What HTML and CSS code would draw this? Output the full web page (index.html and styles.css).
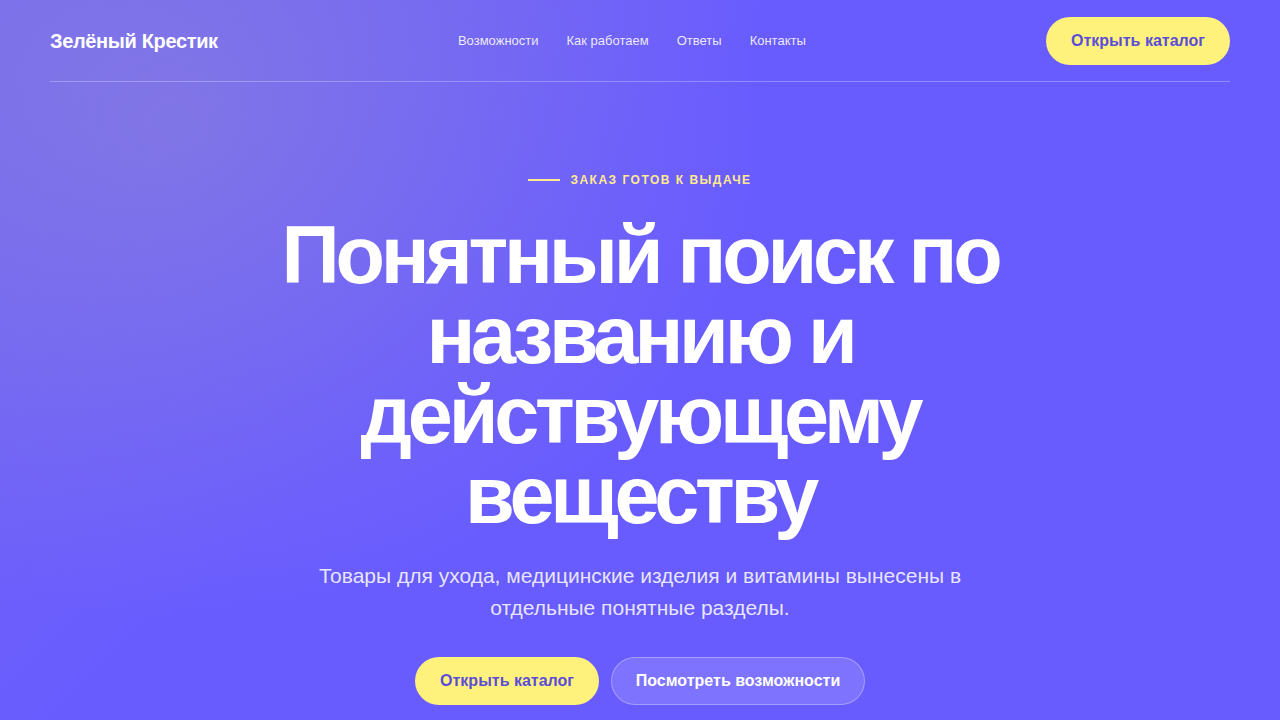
FILE: index.html
```html
<!DOCTYPE html>
<html lang="ru">
<head>
<meta charset="utf-8">
<title>Зелёный Крестик</title>
<link rel="stylesheet" href="styles.css">
</head>
<body>
<div class="page">
  <header class="header">
    <div class="logo">Зелёный Крестик</div>
    <nav class="nav">
      <a href="#">Возможности</a>
      <a href="#">Как работаем</a>
      <a href="#">Ответы</a>
      <a href="#">Контакты</a>
    </nav>
    <a class="btn btn-yellow" href="#">Открыть каталог</a>
  </header>
  <main class="hero">
    <div class="eyebrow"><span class="eyebrow-line"></span>ЗАКАЗ ГОТОВ К ВЫДАЧЕ</div>
    <h1 class="title">Понятный поиск по названию и действующему веществу</h1>
    <p class="lead">Товары для ухода, медицинские изделия и витамины вынесены в отдельные понятные разделы.</p>
    <div class="actions">
      <a class="btn btn-yellow" href="#">Открыть каталог</a>
      <a class="btn btn-ghost" href="#">Посмотреть возможности</a>
    </div>
  </main>
</div>
</body>
</html>
```
FILE: styles.css
```css
* { box-sizing: border-box; }
html, body { margin: 0; padding: 0; }
body {
  font-family: "Liberation Sans", Arial, sans-serif;
  color: #fff;
  background-color: #695cff;
  background-image:
    radial-gradient(ellipse 600px 500px at 170px 120px, rgba(160, 150, 200, 0.36), rgba(160, 150, 200, 0) 100%),
    linear-gradient(135deg, #7367f3 0%, #695cff 40%, #695cff 100%);
  min-height: 720px;
  overflow: hidden;
}
a { text-decoration: none; color: inherit; }
.page { padding: 0 50px; }
.header {
  display: flex;
  align-items: center;
  justify-content: space-between;
  height: 82px;
  border-bottom: 1px solid rgba(255, 255, 255, 0.28);
  padding-top: 1px;
}
.logo {
  font-size: 20px;
  font-weight: 700;
  letter-spacing: -0.35px;
}
.nav {
  display: flex;
  gap: 28px;
  font-size: 13px;
  color: rgba(255, 255, 255, 0.88);
  margin-bottom: 2px;
}
.btn {
  display: inline-flex;
  align-items: center;
  justify-content: center;
  height: 48px;
  padding: 0 24px;
  border-radius: 24px;
  font-size: 16px;
  font-weight: 700;
  white-space: nowrap;
}
.btn-yellow {
  background: #fff27c;
  color: #5a4ed6;
  width: 184px;
}
.btn-ghost {
  background: rgba(255, 255, 255, 0.14);
  border: 1px solid rgba(255, 255, 255, 0.3);
  color: #fff;
  width: 254px;
}
.hero {
  display: flex;
  flex-direction: column;
  align-items: center;
  text-align: center;
  padding-top: 90px;
}
.eyebrow {
  display: flex;
  align-items: center;
  gap: 10px;
  font-size: 12px;
  line-height: 16px;
  font-weight: 700;
  letter-spacing: 1.5px;
  color: #ffe98f;
}
.eyebrow-line {
  display: block;
  width: 32px;
  height: 2px;
  background: #ffe98f;
}
.title {
  margin: 27px 0 0;
  font-size: 81px;
  line-height: 80px;
  font-weight: 700;
  letter-spacing: -4.2px;
  max-width: 800px;
}
.lead {
  margin: 25px 0 0;
  font-size: 21px;
  line-height: 32px;
  color: rgba(255, 255, 255, 0.86);
  max-width: 680px;
}
.actions {
  display: flex;
  gap: 12px;
  margin-top: 33px;
}
```
